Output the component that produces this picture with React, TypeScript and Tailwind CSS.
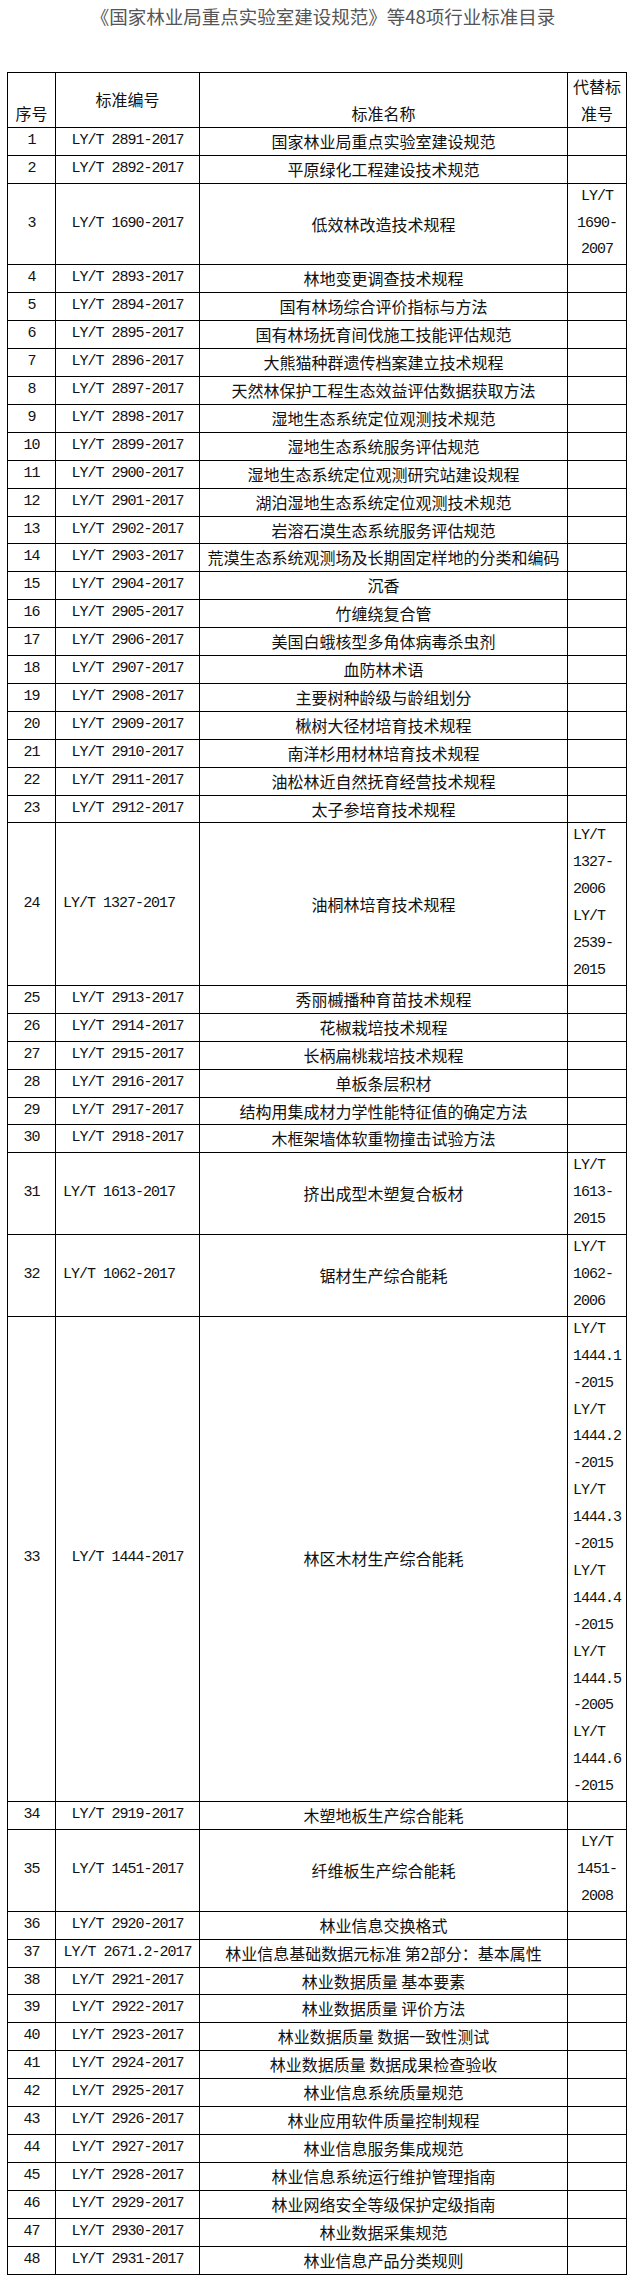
type Row = {
  no: string;
  code: string;
  name: string;
  repl?: string[];
  codeLeft?: boolean;
  replLeft?: boolean;
};

const rows: Row[] = [
  { no: "1", code: "LY/T 2891-2017", name: "国家林业局重点实验室建设规范" },
  { no: "2", code: "LY/T 2892-2017", name: "平原绿化工程建设技术规范" },
  { no: "3", code: "LY/T 1690-2017", name: "低效林改造技术规程", repl: ["LY/T", "1690-", "2007"] },
  { no: "4", code: "LY/T 2893-2017", name: "林地变更调查技术规程" },
  { no: "5", code: "LY/T 2894-2017", name: "国有林场综合评价指标与方法" },
  { no: "6", code: "LY/T 2895-2017", name: "国有林场抚育间伐施工技能评估规范" },
  { no: "7", code: "LY/T 2896-2017", name: "大熊猫种群遗传档案建立技术规程" },
  { no: "8", code: "LY/T 2897-2017", name: "天然林保护工程生态效益评估数据获取方法" },
  { no: "9", code: "LY/T 2898-2017", name: "湿地生态系统定位观测技术规范" },
  { no: "10", code: "LY/T 2899-2017", name: "湿地生态系统服务评估规范" },
  { no: "11", code: "LY/T 2900-2017", name: "湿地生态系统定位观测研究站建设规程" },
  { no: "12", code: "LY/T 2901-2017", name: "湖泊湿地生态系统定位观测技术规范" },
  { no: "13", code: "LY/T 2902-2017", name: "岩溶石漠生态系统服务评估规范" },
  { no: "14", code: "LY/T 2903-2017", name: "荒漠生态系统观测场及长期固定样地的分类和编码" },
  { no: "15", code: "LY/T 2904-2017", name: "沉香" },
  { no: "16", code: "LY/T 2905-2017", name: "竹缠绕复合管" },
  { no: "17", code: "LY/T 2906-2017", name: "美国白蛾核型多角体病毒杀虫剂" },
  { no: "18", code: "LY/T 2907-2017", name: "血防林术语" },
  { no: "19", code: "LY/T 2908-2017", name: "主要树种龄级与龄组划分" },
  { no: "20", code: "LY/T 2909-2017", name: "楸树大径材培育技术规程" },
  { no: "21", code: "LY/T 2910-2017", name: "南洋杉用材林培育技术规程" },
  { no: "22", code: "LY/T 2911-2017", name: "油松林近自然抚育经营技术规程" },
  { no: "23", code: "LY/T 2912-2017", name: "太子参培育技术规程" },
  {
    no: "24",
    code: "LY/T 1327-2017",
    name: "油桐林培育技术规程",
    repl: ["LY/T", "1327-", "2006", "LY/T", "2539-", "2015"],
    codeLeft: true,
    replLeft: true,
  },
  { no: "25", code: "LY/T 2913-2017", name: "秀丽槭播种育苗技术规程" },
  { no: "26", code: "LY/T 2914-2017", name: "花椒栽培技术规程" },
  { no: "27", code: "LY/T 2915-2017", name: "长柄扁桃栽培技术规程" },
  { no: "28", code: "LY/T 2916-2017", name: "单板条层积材" },
  { no: "29", code: "LY/T 2917-2017", name: "结构用集成材力学性能特征值的确定方法" },
  { no: "30", code: "LY/T 2918-2017", name: "木框架墙体软重物撞击试验方法" },
  {
    no: "31",
    code: "LY/T 1613-2017",
    name: "挤出成型木塑复合板材",
    repl: ["LY/T", "1613-", "2015"],
    codeLeft: true,
    replLeft: true,
  },
  {
    no: "32",
    code: "LY/T 1062-2017",
    name: "锯材生产综合能耗",
    repl: ["LY/T", "1062-", "2006"],
    codeLeft: true,
    replLeft: true,
  },
  {
    no: "33",
    code: "LY/T 1444-2017",
    name: "林区木材生产综合能耗",
    repl: [
      "LY/T", "1444.1", "-2015",
      "LY/T", "1444.2", "-2015",
      "LY/T", "1444.3", "-2015",
      "LY/T", "1444.4", "-2015",
      "LY/T", "1444.5", "-2005",
      "LY/T", "1444.6", "-2015",
    ],
    replLeft: true,
  },
  { no: "34", code: "LY/T 2919-2017", name: "木塑地板生产综合能耗" },
  { no: "35", code: "LY/T 1451-2017", name: "纤维板生产综合能耗", repl: ["LY/T", "1451-", "2008"] },
  { no: "36", code: "LY/T 2920-2017", name: "林业信息交换格式" },
  { no: "37", code: "LY/T 2671.2-2017", name: "林业信息基础数据元标准 第2部分：基本属性" },
  { no: "38", code: "LY/T 2921-2017", name: "林业数据质量 基本要素" },
  { no: "39", code: "LY/T 2922-2017", name: "林业数据质量 评价方法" },
  { no: "40", code: "LY/T 2923-2017", name: "林业数据质量 数据一致性测试" },
  { no: "41", code: "LY/T 2924-2017", name: "林业数据质量 数据成果检查验收" },
  { no: "42", code: "LY/T 2925-2017", name: "林业信息系统质量规范" },
  { no: "43", code: "LY/T 2926-2017", name: "林业应用软件质量控制规程" },
  { no: "44", code: "LY/T 2927-2017", name: "林业信息服务集成规范" },
  { no: "45", code: "LY/T 2928-2017", name: "林业信息系统运行维护管理指南" },
  { no: "46", code: "LY/T 2929-2017", name: "林业网络安全等级保护定级指南" },
  { no: "47", code: "LY/T 2930-2017", name: "林业数据采集规范" },
  { no: "48", code: "LY/T 2931-2017", name: "林业信息产品分类规则" },
];

const cell = "border-r border-b border-black flex";
const mono = "font-['Liberation_Mono','Noto_Sans_CJK_SC',monospace] text-[15px] tracking-[-1px]";
const cjk = "font-['Noto_Sans_CJK_SC',sans-serif] text-[16px]";

export default function App() {
  return (
    <div className="w-[638px] min-h-[2275px] bg-white text-[#111] leading-[26.9px]">
      <h1 className="h-[72px] pl-[8px] text-center font-['Noto_Sans_CJK_SC',sans-serif] text-[18.5px] font-normal leading-[33px] text-[#555]">
        《国家林业局重点实验室建设规范》等48项行业标准目录
      </h1>

      <div className="ml-[7px] grid w-[620px] grid-cols-[48px_144px_368px_59px] border-l border-t border-black">
        {/* header */}
        <div className={`${cell} ${cjk} items-end justify-center`}>序号</div>
        <div className={`${cell} ${cjk} items-center justify-center`}>标准编号</div>
        <div className={`${cell} ${cjk} items-end justify-center`}>标准名称</div>
        <div className={`${cell} ${cjk} flex-col items-center`}>
          <span>代替标</span>
          <span>准号</span>
        </div>

        {rows.map((r) => (
          <Line key={r.no} row={r} />
        ))}
      </div>
    </div>
  );
}

function Line({ row }: { row: Row }) {
  return (
    <>
      <div className={`${cell} ${mono} items-center justify-center`}>{row.no}</div>
      <div
        className={`${cell} ${mono} items-center whitespace-pre ${
          row.codeLeft ? "justify-start pl-[7px]" : "justify-center"
        }`}
      >
        {row.code}
      </div>
      <div className={`${cell} ${cjk} items-center justify-center whitespace-pre`}>{row.name}</div>
      <div
        className={`${cell} ${mono} flex-col ${
          row.replLeft ? "items-start pl-[5px]" : "items-center"
        } ${row.repl && row.repl.length > 3 ? "justify-start" : "justify-center"}`}
      >
        {row.repl?.map((t, i) => (
          <span key={i} className="whitespace-pre">
            {t}
          </span>
        ))}
      </div>
    </>
  );
}
